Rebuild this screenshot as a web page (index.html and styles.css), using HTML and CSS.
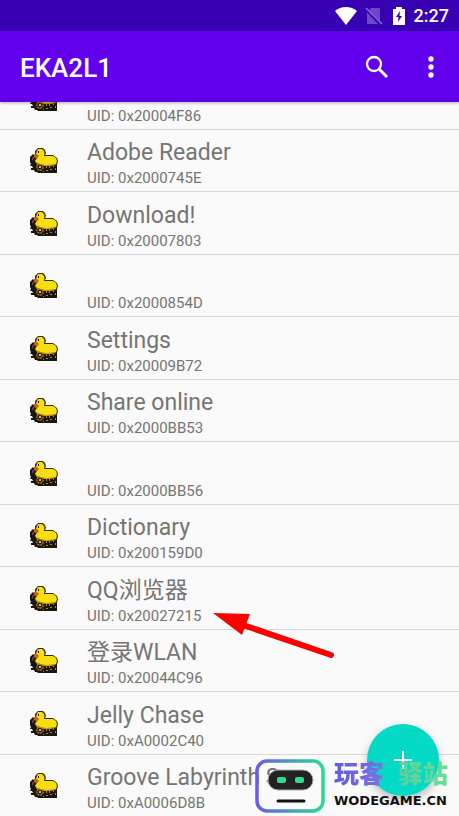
FILE: index.html
```
<!DOCTYPE html>
<html lang="en">
<head>
    <meta charset="UTF-8">
    <meta name="viewport" content="width=device-width, initial-scale=1">
    <title>EKA2L1</title>
    <link rel="stylesheet" href="styles.css">
</head>
<body>
<svg class="defs" aria-hidden="true">
    <symbol id="duck" viewBox="0 0 28 25">
        <!-- cart -->
        <path d="M0 9l3-3 3 3 20 7 1 1v8H8l-1-1H5l-1-2H1v-2h2l-1-2H0l1-2-1-2z" fill="#1b150c"/>
        <path d="M16 18h1v2h-1zM19 18h1v2h-1zM23 17h1v2h-1zM16 22h2v1h-2zM20 21h2v1h-2zM25 20h1v2h-1zM13 23h1v1h-1z" fill="#a88539"/>
        <circle cx="10" cy="19" r="3.200" fill="#2d1d0d" stroke="#b58d3c" stroke-width="1.200" stroke-dasharray="2 .8"/>
        <path d="M9 18h2v2H9z" fill="#f0ad50"/>
        <!-- duck -->
        <path d="M8 0h5l2 2 1 3-1 2h8l4 3 1 3-1 4-3 1-10 0-8-3-2-3 2-3-1-1V3z" fill="#3a3005"/>
        <path d="M8 1h4l2 2 .5 2L14 8h9l3 2 1 3-1 3-4 1H14l-7-2-2-2 2-3-1-4 1-3z" fill="#f6de10"/>
        <path d="M5 14l5 2 6 1 10-1-2 1.500-4 .5h-6l-7-2z" fill="#c49508"/>
        <path d="M4 6h3l2 2-2 2.500L4 9z" fill="#c9621e"/>
        <path d="M8 3h1v2H8z" fill="#111"/>
        <path d="M2 10l2-2v2l-2 3z" fill="#5a554b"/>
    </symbol>
</svg>

<div class="status-bar">
    <svg class="wifi" viewBox="0 0 22 18" role="img" aria-label="Wi-Fi"><path d="M0 4C6-1.300 16-1.300 22 4L11 18z" fill="#fff"/></svg>
    <svg class="sim" viewBox="0 0 18 18" role="img" aria-label="No SIM"><path d="M6 1h9v13L4 3zM2 5l11 12H2z" fill="#6a48c6"/><path d="M1 1l16 16" stroke="#8a6dd2" stroke-width="1.500"/></svg>
    <svg class="battery" viewBox="0 0 12 18" role="img" aria-label="Charging"><path d="M0 2h3V0h6v2h3v16H0z" fill="#fff"/><path d="M7 4L3 10h2.500L5 15l4-6H6.500z" fill="#3700b3"/></svg>
    <span class="clock">2:27</span>
</div>

<header class="toolbar">
    <h1 class="toolbar-title">EKA2L1</h1>
    <button class="icon-button" type="button" aria-label="Search">
        <svg width="24" height="24" viewBox="0 0 24 24" fill="none" stroke="#fff"><circle cx="9" cy="9" r="7" stroke-width="2.300"/><path d="M14 14l8 8" stroke-width="3"/></svg>
    </button>
    <button class="icon-button" type="button" aria-label="More options">
        <svg width="6" height="22" viewBox="0 0 6 22" fill="#fff"><circle cx="3" cy="3" r="2.700"/><circle cx="3" cy="11" r="2.700"/><circle cx="3" cy="19" r="2.700"/></svg>
    </button>
</header>

<main class="content">
    <ul class="app-list">
        <li class="app"><svg class="app-icon"><use href="#duck"/></svg><div class="app-text"><div class="app-name"></div><div class="app-uid">UID: 0x20004F86</div></div></li>
        <li class="app"><svg class="app-icon"><use href="#duck"/></svg><div class="app-text"><div class="app-name">Adobe Reader</div><div class="app-uid">UID: 0x2000745E</div></div></li>
        <li class="app"><svg class="app-icon"><use href="#duck"/></svg><div class="app-text"><div class="app-name">Download!</div><div class="app-uid">UID: 0x20007803</div></div></li>
        <li class="app"><svg class="app-icon"><use href="#duck"/></svg><div class="app-text"><div class="app-name"></div><div class="app-uid">UID: 0x2000854D</div></div></li>
        <li class="app"><svg class="app-icon"><use href="#duck"/></svg><div class="app-text"><div class="app-name">Settings</div><div class="app-uid">UID: 0x20009B72</div></div></li>
        <li class="app"><svg class="app-icon"><use href="#duck"/></svg><div class="app-text"><div class="app-name">Share online</div><div class="app-uid">UID: 0x2000BB53</div></div></li>
        <li class="app"><svg class="app-icon"><use href="#duck"/></svg><div class="app-text"><div class="app-name"></div><div class="app-uid">UID: 0x2000BB56</div></div></li>
        <li class="app"><svg class="app-icon"><use href="#duck"/></svg><div class="app-text"><div class="app-name">Dictionary</div><div class="app-uid">UID: 0x200159D0</div></div></li>
        <li class="app"><svg class="app-icon"><use href="#duck"/></svg><div class="app-text"><div class="app-name">QQ浏览器</div><div class="app-uid">UID: 0x20027215</div></div>
            <svg class="arrow" viewBox="0 0 122 48" aria-hidden="true"><path d="M30 13L118 43" stroke="#fe0000" stroke-width="6" stroke-linecap="round"/><path d="M0 1l37 1-8 21z" fill="#fe0000"/></svg>
        </li>
        <li class="app"><svg class="app-icon"><use href="#duck"/></svg><div class="app-text"><div class="app-name">登录WLAN</div><div class="app-uid">UID: 0x20044C96</div></div></li>
        <li class="app"><svg class="app-icon"><use href="#duck"/></svg><div class="app-text"><div class="app-name">Jelly Chase</div><div class="app-uid">UID: 0xA0002C40</div></div></li>
        <li class="app"><svg class="app-icon"><use href="#duck"/></svg><div class="app-text"><div class="app-name">Groove Labyrinth S</div><div class="app-uid">UID: 0xA0006D8B</div></div></li>
    </ul>
</main>

<button class="fab" type="button" aria-label="Add">
    <svg width="18" height="18" viewBox="0 0 18 18"><path d="M9 0v18M0 9h18" stroke="#fff" stroke-width="2"/></svg>
</button>

<div class="watermark">
    <svg class="watermark-logo" viewBox="0 0 70 54" aria-hidden="true">
        <defs>
            <linearGradient id="frame">
                <stop offset="0" stop-color="#6b5be6"/>
                <stop offset="1" stop-color="#27dc90"/>
            </linearGradient>
        </defs>
        <rect x="2" y="2" width="66" height="50" rx="10" fill="none" stroke="url(#frame)" stroke-width="3.500"/>
        <rect x="13" y="11" width="45" height="20" rx="10" fill="#222" stroke="#aaa" stroke-width="1"/>
        <rect x="22" y="18" width="9" height="6" rx="2" fill="#2bdc91"/>
        <rect x="40" y="18" width="9" height="6" rx="2" fill="#2bdc91"/>
        <path d="M23 42h26" stroke="#111" stroke-width="3" stroke-linecap="round"/>
    </svg>
    <div class="watermark-text">
        <div class="watermark-name"><span>玩客</span><span>驿站</span></div>
        <div class="watermark-site">WODEGAME.CN</div>
    </div>
</div>
</body>
</html>
```
FILE: styles.css
```
* {
    box-sizing: border-box;
    margin: 0;
    padding: 0;
}

body {
    display: flex;
    flex-direction: column;
    height: 100vh;
    overflow: hidden;
    font-family: Roboto, "Noto Sans CJK SC", sans-serif;
    color: #757575;
    background: #fafafa;
}

.defs {
    position: absolute;
    width: 0;
    height: 0;
}

.status-bar {
    display: flex;
    flex: none;
    align-items: center;
    justify-content: flex-end;
    height: 31px;
    padding: 0 10px;
    color: #fff;
    background: #3700b3;
}

.wifi {
    width: 22px;
    height: 18px;
    margin-right: 8px;
}

.sim {
    width: 18px;
    height: 18px;
    margin-right: 10px;
}

.battery {
    width: 12px;
    height: 18px;
    margin-right: 9px;
}

.clock {
    font-size: 18px;
    font-weight: 500;
}

.toolbar {
    position: relative;
    z-index: 1;
    display: flex;
    flex: none;
    align-items: center;
    height: 71px;
    padding: 0 10px 0 20px;
    color: #fff;
    background: #6200ee;
    box-shadow: 0 1px 3px rgba(0, 0, 0, .3);
}

.toolbar-title {
    flex: 1;
    padding-top: 2px;
    font-size: 26px;
    font-weight: 500;
    line-height: 32px;
}

.icon-button {
    display: flex;
    align-items: center;
    justify-content: center;
    width: 36px;
    height: 48px;
    border: 0;
    background: none;
    cursor: pointer;
}

.icon-button + .icon-button {
    margin-left: 18px;
}

.content {
    flex: 1;
    min-height: 0;
    overflow: hidden;
}

/* list is scrolled part of a row down */
.app-list {
    margin-top: -35px;
    list-style: none;
}

.app {
    position: relative;
    display: flex;
    align-items: center;
    height: 62px;
    padding: 0 30px;
    border-bottom: 1px solid #d6d6d6;
}

.app:nth-child(odd) {
    height: 63px;
}

.app-icon {
    flex: none;
    width: 28px;
    height: 25px;
    margin-right: 29px;
}

.app-text {
    padding-top: 5px;
}

.app-name {
    height: 30px;
    font-size: 23px;
    line-height: 30px;
    white-space: nowrap;
}

.app-uid {
    font-size: 15px;
    line-height: 20px;
}

.arrow {
    position: absolute;
    top: 45px;
    left: 213px;
    z-index: 1;
    width: 122px;
    height: 48px;
}

.fab {
    position: absolute;
    right: 20px;
    bottom: 20px;
    display: flex;
    align-items: center;
    justify-content: center;
    width: 72px;
    height: 72px;
    border: 0;
    border-radius: 50%;
    background: #03dac5;
    box-shadow: 0 4px 8px rgba(0, 0, 0, .25);
    cursor: pointer;
}

.watermark {
    position: absolute;
    right: 11px;
    bottom: 0;
    display: flex;
    gap: 9px;
    pointer-events: none;
}

.watermark-logo {
    width: 70px;
    height: 54px;
}

.watermark-name {
    display: flex;
    justify-content: space-between;
    gap: 14px;
    font-family: "Noto Sans CJK SC", sans-serif;
    font-size: 25px;
    font-weight: 900;
    line-height: 27px;
    color: transparent;
    background: linear-gradient(90deg, #6558e8, #7a70e0 40%, #62cf9c 60%, #62e096);
    -webkit-background-clip: text;
    background-clip: text;
}

.watermark-site {
    font-family: "DejaVu Sans", sans-serif;
    font-size: 13px;
    font-weight: bold;
    line-height: 30px;
    color: #111;
}
```
